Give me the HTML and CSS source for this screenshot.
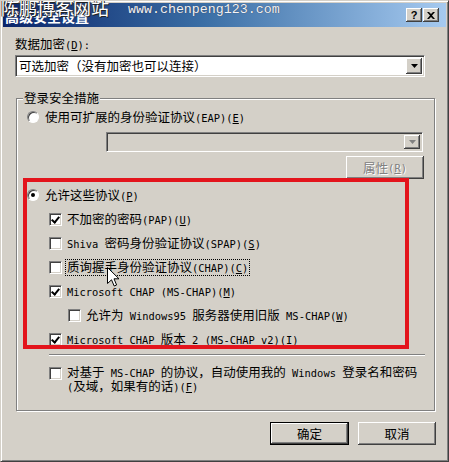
FILE: index.html
```html
<!DOCTYPE html>
<html>
<head>
<meta charset="utf-8">
<link rel="stylesheet" href="styles.css">
</head>
<body>
<div class="window">
  <div class="titlebar">
    <span class="title">高级安全设置</span>
    <div class="caption-btns">
      <span class="cbtn help">?</span>
      <span class="cbtn close"><svg width="8" height="7" viewBox="0 0 8 7"><path d="M0 0h2l2 2 2-2h2L5 3.5 8 7H6L4 5 2 7H0l3-3.5z" fill="#000"/></svg></span>
    </div>
  </div>
  <div class="content">
    <div class="label">数据加密<span class="en">(<u>D</u>):</span></div>
    <div class="select">
      <span class="sel-text">可选加密（没有加密也可以连接）</span>
      <span class="arrow"><svg width="7" height="4" viewBox="0 0 7 4"><path d="M0 0h7L3.5 4z" fill="#000"/></svg></span>
    </div>
    <fieldset class="group">
      <legend>登录安全措施</legend>
      <div class="gbody">
        <div class="row lvl0">
          <span class="rb"></span>
          <span>使用可扩展的身份验证协议<span class="en">(EAP)(<u>E</u>)</span></span>
        </div>
        <div class="select disabled eap">
          <span class="sel-text"></span>
          <span class="arrow"><svg width="7" height="4" viewBox="0 0 7 4"><path d="M0 0h7L3.5 4z" fill="#808080"/></svg></span>
        </div>
        <div class="btn props">属性<span class="en">(<u>R</u>)</span></div>
        <div class="row lvl0 allow">
          <span class="rb on"></span>
          <span>允许这些协议<span class="en">(<u>P</u>)</span></span>
        </div>
        <div class="row lvl1">
          <span class="cb on"></span>
          <span>不加密的密码<span class="en">(PAP)(<u>U</u>)</span></span>
        </div>
        <div class="row lvl1">
          <span class="cb"></span>
          <span><span class="en">Shiva </span>密码身份验证协议<span class="en">(SPAP)(<u>S</u>)</span></span>
        </div>
        <div class="row lvl1">
          <span class="cb"></span>
          <span class="focus">质询握手身份验证协议<span class="en">(CHAP)(<u>C</u>)</span></span>
        </div>
        <div class="row lvl1">
          <span class="cb on"></span>
          <span><span class="en">Microsoft CHAP (MS-CHAP)(<u>M</u>)</span></span>
        </div>
        <div class="row lvl2">
          <span class="cb"></span>
          <span>允许为<span class="en"> Windows95 </span>服务器使用旧版<span class="en"> MS-CHAP(<u>W</u>)</span></span>
        </div>
        <div class="row lvl1">
          <span class="cb on"></span>
          <span><span class="en">Microsoft CHAP </span>版本<span class="en"> 2 (MS-CHAP v2)(<u>I</u>)</span></span>
        </div>
        <div class="sep"></div>
        <div class="row lvl1 multi">
          <span class="cb"></span>
          <span class="mtext"><span class="line">对基于<span class="en"> MS-CHAP </span>的协议，自动使用我的<span class="en"> Windows </span>登录名和密码</span><span class="line"><span class="en">(</span>及域，如果有的话<span class="en">)(<u>F</u>)</span></span></span>
        </div>
      </div>
    </fieldset>
    <div class="buttons">
      <div class="btn default">确定</div>
      <div class="btn">取消</div>
    </div>
  </div>
  <div class="wm wm-cn">陈鹏博客网站</div>
  <div class="wm wm-url">www.chenpeng123.com</div>
  <div class="redbox"></div>
  <svg class="cursor" width="13" height="20" viewBox="0 0 13 20"><path d="M0.5 0.5V16.5L4.5 12.8L7.2 19L9.6 18L7 11.8H12Z" fill="#fff" stroke="#000" stroke-width="1" stroke-linejoin="miter"/></svg>
</div>
</body>
</html>
```

FILE: styles.css
```css
body {
  margin: 0;
  background: #d4d0c8;
}

.window {
  position: relative;
  width: 449px;
  height: 462px;
  box-sizing: border-box;
  background: #d4d0c8;
  border: 1px solid;
  border-color: #d4d0c8 #404040 #404040 #d4d0c8;
  box-shadow: inset 1px 1px #fff, inset -1px -1px #808080;
  padding: 2px;
  font-family: "Noto Sans CJK SC", sans-serif;
  font-size: 12.5px;
  line-height: 14px;
  color: #000;
  overflow: hidden;
}

.en {
  font-family: "DejaVu Sans Mono", "Noto Sans CJK SC", monospace;
  font-size: 10.4px;
  white-space: pre;
}

u {
  text-decoration: underline;
}

/* title bar */
.titlebar {
  height: 24px;
  box-sizing: border-box;
  display: flex;
  align-items: center;
  padding: 2px 7px 0 2px;
  background: linear-gradient(to right, #0a246a 0%, #3a6ea5 45%, #a6caf0 100%);
}

.title {
  flex: 1;
  color: #fff;
  font-weight: bold;
  font-size: 14px;
  line-height: 16px;
}

.caption-btns {
  display: flex;
  gap: 1px;
  margin-top: -2px;
}

.cbtn {
  width: 16px;
  height: 14px;
  box-sizing: border-box;
  display: flex;
  align-items: center;
  justify-content: center;
  background: #d4d0c8;
  box-shadow: inset -1px -1px #404040, inset 1px 1px #fff, inset -2px -2px #808080;
  font-family: "Liberation Sans", sans-serif;
  font-weight: bold;
  font-size: 11px;
  line-height: 11px;
}

.wm {
  position: absolute;
  color: #fff;
  white-space: nowrap;
  pointer-events: none;
}

.wm-cn {
  left: 0;
  top: -5px;
  font-size: 18px;
  line-height: 22px;
  text-shadow: 1px 1px 0 #222, -1px 0 0 #444;
}

.wm-url {
  left: 127px;
  top: 2px;
  font-family: "Liberation Mono", monospace;
  font-size: 13.3px;
  line-height: 14px;
  color: #f2f4f8;
  text-shadow: 0 0 1px #334;
}

/* content */
.content {
  padding: 10px 10px 0 12px;
}

.label {
  height: 14px;
}

.select {
  position: relative;
  margin-top: 4px;
  width: 410px;
  height: 22px;
  box-sizing: border-box;
  background: #fff;
  border: 1px solid;
  border-color: #808080 #fff #fff #808080;
  box-shadow: inset 1px 1px #404040, inset -1px -1px #d4d0c8;
  display: flex;
  align-items: center;
  padding: 0 2px 0 3px;
}

.sel-text {
  flex: 1;
  line-height: 14px;
}

.arrow {
  width: 16px;
  height: 16px;
  box-sizing: border-box;
  background: #d4d0c8;
  box-shadow: inset -1px -1px #404040, inset 1px 1px #fff, inset -2px -2px #808080;
  display: flex;
  align-items: center;
  justify-content: center;
}

.select.disabled {
  background: #d4d0c8;
}

.select.eap {
  margin: 7px 0 0 89px;
  width: 317px;
  height: 20px;
}

.select.eap .arrow {
  height: 14px;
}

/* group */
.group {
  margin: 14px 1px 0 1px;
  padding: 0;
  min-inline-size: 0;
  border: 1px solid #808080;
  box-shadow: inset 1px 1px #fff, 1px 1px #fff;
}

.group legend {
  margin-left: 6px;
  padding: 0 1px;
  line-height: 14px;
  background: #d4d0c8;
}

.gbody {
  padding: 4px 0 17px 0;
}

.row {
  display: flex;
  align-items: center;
  height: 16px;
  white-space: nowrap;
}

.row + .row {
  margin-top: 8px;
}

.lvl0 {
  padding-left: 10px;
  gap: 6px;
}

.lvl1 {
  padding-left: 32px;
  gap: 5px;
}

.lvl2 {
  padding-left: 51px;
  gap: 5px;
}

.row.allow {
  margin-top: 8px;
}

.rb {
  width: 12px;
  height: 12px;
  box-sizing: border-box;
  border-radius: 50%;
  background: #fff;
  border: 1px solid;
  border-color: #808080 #fff #fff #808080;
  box-shadow: inset 1px 1px #404040;
  flex: none;
  position: relative;
}

.rb.on::after {
  content: "";
  position: absolute;
  left: 3px;
  top: 3px;
  width: 4px;
  height: 4px;
  border-radius: 50%;
  background: #000;
}

.cb {
  width: 13px;
  height: 13px;
  box-sizing: border-box;
  background: #fff;
  border: 1px solid;
  border-color: #808080 #fff #fff #808080;
  box-shadow: inset 1px 1px #404040, inset -1px -1px #d4d0c8;
  flex: none;
  position: relative;
}

.cb.on::after {
  content: "";
  position: absolute;
  left: 3px;
  top: 1px;
  width: 3px;
  height: 6px;
  border: solid #000;
  border-width: 0 2px 2px 0;
  transform: rotate(40deg);
}

.focus {
  outline: 1px dotted #000;
  outline-offset: 0;
  padding: 0 1px;
  margin-left: -1px;
}

.sep {
  margin: 7px 0 0 32px;
  width: 376px;
  height: 1px;
  background: #808080;
  box-shadow: 0 1px #fff;
}

.row.multi {
  margin-top: 12px;
  height: auto;
  align-items: flex-start;
}

.mtext {
  display: flex;
  flex-direction: column;
  margin-top: -2px;
}

.mtext .line {
  display: block;
  height: 14px;
  line-height: 14px;
}

/* buttons */
.btn {
  height: 23px;
  box-sizing: border-box;
  display: flex;
  align-items: center;
  justify-content: center;
  background: #d4d0c8;
  box-shadow: inset -1px -1px #404040, inset 1px 1px #fff, inset -2px -2px #808080;
}

.btn.props {
  width: 78px;
  margin: 4px 0 0 329px;
  color: #808080;
  text-shadow: 1px 1px 0 #fff;
}

.buttons {
  display: flex;
  justify-content: flex-end;
  gap: 9px;
  margin-top: 11px;
}

.buttons .btn {
  width: 78px;
}

.buttons .btn.default {
  width: 79px;
  border: 1px solid #000;
}

/* overlays */
.redbox {
  position: absolute;
  left: 22px;
  top: 177px;
  width: 386px;
  height: 171px;
  box-sizing: border-box;
  border: 4px solid #e3141c;
  pointer-events: none;
}

.cursor {
  position: absolute;
  left: 106px;
  top: 266px;
}
```
